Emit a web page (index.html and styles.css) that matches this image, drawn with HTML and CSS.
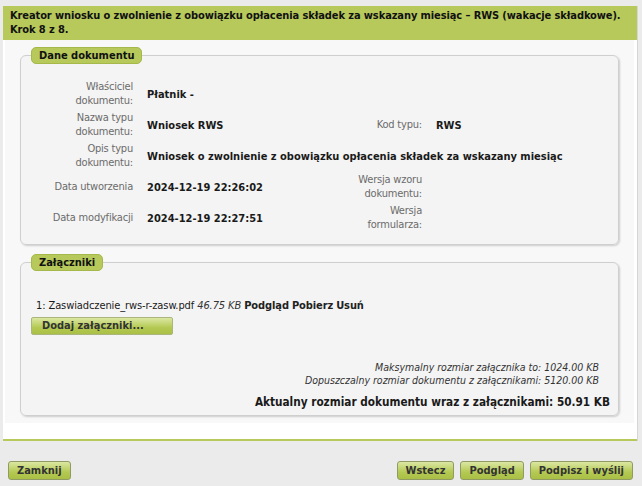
FILE: index.html
```html
<!DOCTYPE html>
<html lang="pl">
<head>
    <meta charset="UTF-8">
    <meta name="viewport" content="width=device-width, initial-scale=1.0">
    <title>Kreator wniosku RWS</title>
    <link rel="stylesheet" href="styles.css">
</head>
<body>
    <div class="wizard">
        <div class="wizard-head">Kreator wniosku o zwolnienie z obowiązku opłacenia składek za wskazany miesiąc – RWS (wakacje składkowe). Krok 8 z 8.</div>
        <div class="wizard-body">
            <div class="wizard-content">
                <fieldset class="box">
                    <legend>Dane dokumentu</legend>
                    <div class="details">
                        <div class="lbl">Właściciel dokumentu:</div>
                        <div class="val wide">Płatnik -</div>

                        <div class="lbl">Nazwa typu dokumentu:</div>
                        <div class="val">Wniosek RWS</div>
                        <div class="lbl lbl2">Kod typu:</div>
                        <div class="val">RWS</div>

                        <div class="lbl">Opis typu dokumentu:</div>
                        <div class="val wide">Wniosek o zwolnienie z obowiązku opłacenia składek za wskazany miesiąc</div>

                        <div class="lbl">Data utworzenia</div>
                        <div class="val">2024-12-19 22:26:02</div>
                        <div class="lbl lbl2">Wersja wzoru dokumentu:</div>
                        <div class="val"></div>

                        <div class="lbl">Data modyfikacji</div>
                        <div class="val">2024-12-19 22:27:51</div>
                        <div class="lbl lbl2">Wersja formularza:</div>
                        <div class="val"></div>
                    </div>
                </fieldset>

                <fieldset class="box box-files">
                    <legend>Załączniki</legend>
                    <div class="files">
                        <div class="file">1: Zaswiadczenie_rws-r-zasw.pdf <i>46.75 KB</i> <a href="#">Podgląd</a> <a href="#">Pobierz</a> <a href="#">Usuń</a></div>
                        <button class="btn btn-add">Dodaj załączniki...</button>
                        <div class="limits">
                            <div>Maksymalny rozmiar załącznika to: 1024.00 KB</div>
                            <div>Dopuszczalny rozmiar dokumentu z załącznikami: 5120.00 KB</div>
                        </div>
                        <div class="total">Aktualny rozmiar dokumentu wraz z załącznikami: 50.91 KB</div>
                    </div>
                </fieldset>
            </div>
        </div>
    </div>

    <div class="actions">
        <button class="btn">Zamknij</button>
        <div class="actions-right">
            <button class="btn">Wstecz</button>
            <button class="btn">Podgląd</button>
            <button class="btn">Podpisz i wyślij</button>
        </div>
    </div>
</body>
</html>
```

FILE: styles.css
```css
body {
    margin: 0;
    padding: 6px 4px 0 3px;
    background-color: #ebebeb;
    font-family: "DejaVu Sans Condensed", "DejaVu Sans", sans-serif;
    font-size: 11px;
    color: #1a1a1a;
}
.wizard {
    background: #fff;
    border-right: 1px solid #d6d6d6;
}
.wizard-head {
    background-color: #b7c95b;
    font-weight: bold;
    font-size: 11px;
    letter-spacing: -0.1px;
    line-height: 14px;
    padding: 3px 7px 3px 7px;
    color: #111;
}
.wizard-body {
    padding: 0 3px 16px 2px;
    border-bottom: 2px solid #b7c95b;
}
.wizard-content {
    background: #f8f8f8;
    padding: 7px 15px 7px 15px;
}
.box {
    margin: 0 0 9px 0;
    padding: 16px 10px 12px 10px;
    background: #f4f4f4;
    border: 1px solid #cfcfcf;
    border-radius: 6px;
    box-shadow: 1px 1px 2px rgba(0, 0, 0, 0.18);
}
.box-files {
    margin-bottom: 0;
    padding-bottom: 6px;
}
.box legend {
    background: #b7c95b;
    border: 1px solid #a5b84a;
    border-radius: 5px;
    padding: 0 7px;
    line-height: 15px;
    font-weight: bold;
    font-size: 11px;
    color: #111;
}
.details {
    display: grid;
    grid-template-columns: 92px 181px 80px auto;
    column-gap: 14px;
    row-gap: 3px;
    padding-left: 10px;
    align-items: center;
}
.lbl {
    text-align: right;
    color: #6b6b6b;
    letter-spacing: -0.2px;
    line-height: 14px;
    min-height: 28px;
    display: flex;
    align-items: center;
    justify-content: flex-end;
}
.val {
    font-weight: bold;
}
.val.wide {
    grid-column: 2 / 5;
}
.files {
    padding: 12px 0 0 5px;
}
.file {
    line-height: 14px;
    letter-spacing: -0.1px;
}
.file i {
    color: #333;
}
.file a {
    color: #222;
    font-weight: bold;
    text-decoration: none;
}
.btn {
    font-family: inherit;
    font-size: 11px;
    font-weight: bold;
    color: #333;
    background: linear-gradient(#dce7a3, #b3c952 60%, #a9bf45);
    border: 1px solid #8f9b63;
    border-radius: 3px;
    height: 19px;
    padding: 0 8px;
    line-height: 16px;
    cursor: pointer;
}
.btn-add {
    display: block;
    width: 142px;
    height: 18px;
    margin: 4px 0 0 -5px;
    padding-left: 10px;
    text-align: left;
    border-color: #a9b67c;
    border-radius: 2px;
}
.limits {
    margin-top: 26px;
    padding-right: 9px;
    text-align: right;
    font-style: italic;
    font-size: 10.5px;
    color: #333;
    line-height: 13px;
}
.total {
    margin-top: 8px;
    text-align: right;
    font-weight: bold;
    font-size: 11.7px;
    line-height: 14px;
    margin-right: -2px;
}
.actions {
    display: flex;
    justify-content: space-between;
    padding: 20px 5px 0 5px;
}
.actions-right {
    display: flex;
    gap: 6px;
}
```
